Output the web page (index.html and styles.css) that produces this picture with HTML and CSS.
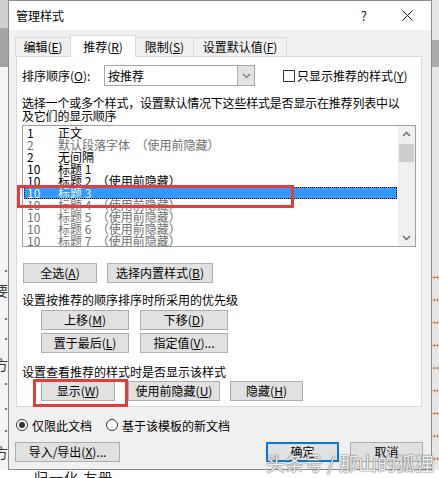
FILE: index.html
```html
<!DOCTYPE html>
<html lang="zh-CN">
  <head>
    <meta charset="UTF-8" />
    <title>管理样式</title>
    <link rel="stylesheet" href="styles.css">
  </head>
  <body>
    <div class="screen">
      <div class="side-left">
        <span class="peek dot d1">··</span>
        <span class="peek ch c1">要</span>
        <span class="peek dot d2">·</span>
        <span class="peek dot d3">·</span>
        <span class="peek ch c2">方</span>
        <span class="peek dot d4">·</span>
        <span class="peek dot d5">·</span>
        <span class="peek dot d6">·</span>
        <span class="peek ch c3">方</span>
      </div>

      <div class="dialog">
        <div class="titlebar">
          <span class="title">管理样式</span>
          <span class="help">?</span>
          <svg class="close" width="11" height="11" viewBox="0 0 11 11">
            <path d="M0.5 0.5 L10.5 10.5 M10.5 0.5 L0.5 10.5" stroke="#111" stroke-width="1" fill="none" />
          </svg>
        </div>

        <div class="content">
          <div class="tabs">
            <div class="tab t1">编辑(<u>E</u>)</div>
            <div class="tab t2 active">推荐(<u>R</u>)</div>
            <div class="tab t3">限制(<u>S</u>)</div>
            <div class="tab t4">设置默认值(<u>F</u>)</div>
          </div>

          <div class="panel">
            <div class="sort-row">
              <span class="sort-label">排序顺序(<u>O</u>):</span>
              <div class="select">
                <span class="select-value">按推荐</span>
                <span class="select-arrow">
                  <svg width="9" height="6" viewBox="0 0 9 6">
                    <path d="M1 1 L4.5 4.5 L8 1" stroke="#707070" stroke-width="1.2" fill="none" />
                  </svg>
                </span>
              </div>
              <span class="checkbox"></span>
              <span class="check-label">只显示推荐的样式(<u>Y</u>)</span>
            </div>

            <p class="desc">选择一个或多个样式，设置默认情况下这些样式是否显示在推荐列表中以<br>及它们的显示顺序</p>

            <div class="listbox">
              <div class="items">
                <div class="item"><span class="num">1</span><span class="name">正文</span></div>
                <div class="item muted"><span class="num">2</span><span class="name">默认段落字体  （使用前隐藏）</span></div>
                <div class="item"><span class="num">2</span><span class="name">无间隔</span></div>
                <div class="item"><span class="num">10</span><span class="name">标题 1</span></div>
                <div class="item"><span class="num">10</span><span class="name">标题 2  （使用前隐藏）</span></div>
                <div class="item selected"><span class="num">10</span><span class="name">标题 3</span></div>
                <div class="item muted"><span class="num">10</span><span class="name">标题 4  （使用前隐藏）</span></div>
                <div class="item muted"><span class="num">10</span><span class="name">标题 5  （使用前隐藏）</span></div>
                <div class="item muted"><span class="num">10</span><span class="name">标题 6  （使用前隐藏）</span></div>
                <div class="item muted"><span class="num">10</span><span class="name">标题 7  （使用前隐藏）</span></div>
              </div>
              <div class="scrollbar">
                <svg width="9" height="6" viewBox="0 0 9 6">
                  <path d="M1 5 L4.5 1.5 L8 5" stroke="#606060" stroke-width="1.3" fill="none" />
                </svg>
                <div class="thumb"></div>
                <div class="track"></div>
                <svg width="9" height="6" viewBox="0 0 9 6">
                  <path d="M1 1 L4.5 4.5 L8 1" stroke="#606060" stroke-width="1.3" fill="none" />
                </svg>
              </div>
              <div class="mark mark-row"></div>
            </div>

            <div class="btn-row first">
              <button class="btn w74">全选(<u>A</u>)</button>
              <button class="btn w106">选择内置样式(<u>B</u>)</button>
            </div>

            <p class="label">设置按推荐的顺序排序时所采用的优先级</p>
            <div class="btn-grid">
              <button class="btn">上移(<u>M</u>)</button>
              <button class="btn">下移(<u>D</u>)</button>
              <button class="btn">置于最后(<u>L</u>)</button>
              <button class="btn">指定值(<u>V</u>)...</button>
            </div>

            <p class="label second">设置查看推荐的样式时是否显示该样式</p>
            <div class="btn-row third">
              <div class="marked">
                <button class="btn w74">显示(<u>W</u>)</button>
                <div class="mark mark-btn"></div>
              </div>
              <button class="btn w92">使用前隐藏(<u>U</u>)</button>
              <button class="btn w73">隐藏(<u>H</u>)</button>
            </div>
          </div>

          <div class="radio-row">
            <span class="radio checked"></span>
            <span class="radio-label">仅限此文档</span>
            <span class="radio second"></span>
            <span class="radio-label">基于该模板的新文档</span>
          </div>

          <div class="footer">
            <button class="btn w105">导入/导出(<u>X</u>)...</button>
            <button class="btn w73 default">确定</button>
            <button class="btn w73">取消</button>
          </div>
        </div>
      </div>

      <div class="side-right">
        <div class="dots"></div>
      </div>
    </div>

    <div class="doc-line">归一化 友册</div>

    <div class="watermark">头条号 / 那山的狐狸</div>
  </body>
</html>
```

FILE: styles.css
```css
* {
  box-sizing: border-box;
}

body {
  margin: 0;
  width: 439px;
  height: 478px;
  overflow: hidden;
  position: relative;
  background-color: #ffffff;
  font-family: "Noto Sans CJK SC", "Noto Sans", sans-serif;
  font-size: 12px;
  color: #000000;
}

u {
  text-decoration-thickness: 1px;
  text-underline-offset: 1px;
}

p {
  margin: 0;
}

.screen {
  display: flex;
  height: 470px;
}

/* document window behind the dialog */
.side-left {
  width: 8px;
  position: relative;
  overflow: hidden;
  background: linear-gradient(#cfcfcf 0 28px, #a4a4a4 28px 67px, #f4f4f4 67px);
}

.peek {
  position: absolute;
  color: #333;
  line-height: 14px;
}

.peek.dot {
  left: 1px;
  font-size: 10px;
  color: #555;
}

.peek.ch {
  left: -6px;
  font-size: 14px;
}

.d1 { top: 264px; }
.c1 { top: 283px; }
.d2 { top: 312px; }
.d3 { top: 332px; }
.c2 { top: 357px; }
.d4 { top: 377px; }
.d5 { top: 402px; }
.d6 { top: 424px; }
.c3 { top: 445px; }

.side-right {
  width: 7px;
  background: linear-gradient(#e4e4e4 0 40px, #aaaaaa 40px 67px, #e6e6e6 67px);
}

.side-right .dots {
  margin-top: 266px;
  height: 204px;
  background-image: radial-gradient(circle, #c8783a 0.9px, transparent 1.3px);
  background-size: 3px 22.7px;
  background-position: 1px 0;
}

/* dialog */
.dialog {
  width: 424px;
  border: 1px solid #8a8a8a;
  background-color: #f0f0f0;
  display: flex;
  flex-direction: column;
}

.titlebar {
  height: 29px;
  background-color: #ffffff;
  display: flex;
  align-items: center;
  padding-left: 7px;
}

.title {
  flex: 1;
  font-size: 12px;
}

.help {
  font-size: 13px;
  color: #222;
  margin-right: 35px;
}

.close {
  margin-right: 18px;
}

.content {
  padding: 5px 0 0 6px;
  display: flex;
  flex-direction: column;
}

.tabs {
  display: flex;
  align-items: flex-end;
  height: 21px;
  position: relative;
  z-index: 1;
}

.tab {
  height: 19px;
  border: 1px solid #d9d9d9;
  border-bottom: none;
  margin-right: -1px;
  display: flex;
  align-items: center;
  justify-content: center;
  line-height: 14px;
  background-color: #f0f0f0;
}

.tab.active {
  height: 22px;
  margin-bottom: -1px;
  background-color: #ffffff;
}

.t1 { width: 56px; }
.t2 { width: 66px; }
.t3 { width: 59px; }
.t4 { width: 94px; }

.panel {
  margin-left: 1px;
  width: 406px;
  height: 351px;
  border: 1px solid #d9d9d9;
  background-color: #ffffff;
  padding: 8px 0 0 5px;
  display: flex;
  flex-direction: column;
}

.sort-row {
  display: flex;
  align-items: center;
  height: 21px;
}

.sort-label {
  width: 82px;
}

.select {
  width: 151px;
  height: 21px;
  border: 1px solid #a5a5a5;
  display: flex;
  align-items: center;
}

.select-value {
  flex: 1;
  padding-left: 3px;
}

.select-arrow {
  width: 17px;
  height: 19px;
  border-left: 1px solid #b0b0b0;
  background-color: #e2e2e2;
  display: flex;
  align-items: center;
  justify-content: center;
}

.checkbox {
  width: 12px;
  height: 12px;
  border: 1px solid #333333;
  margin-left: 28px;
  margin-right: 2px;
}

.desc {
  margin-top: 10px;
  line-height: 13px;
  letter-spacing: -0.2px;
}

.listbox {
  position: relative;
  margin-top: 3px;
  width: 394px;
  height: 122px;
  border: 1px solid #a0a0a0;
  display: flex;
}

.items {
  flex: 1;
  padding-top: 1px;
}

.item {
  display: flex;
  height: 12px;
  line-height: 12px;
  margin: 0 1px 0 1px;
  padding-left: 3px;
  white-space: pre;
}

.num {
  width: 31px;
}

.item.muted {
  color: #707070;
}

.item.selected {
  background-color: #3399ff;
  color: #eaf4ff;
  outline: 1px dotted #000;
  outline-offset: -1px;
}

.scrollbar {
  width: 17px;
  background-color: #f0f0f0;
  display: flex;
  flex-direction: column;
  align-items: center;
  padding: 5px 0 5px;
}

.thumb {
  width: 15px;
  height: 18px;
  margin-top: 7px;
  background-color: #cdcdcd;
}

.track {
  flex: 1;
}

.mark {
  position: absolute;
  border: 3px solid #e23d3d;
}

.mark-row {
  left: -6px;
  top: 59px;
  width: 277px;
  height: 23px;
}

.btn {
  height: 20px;
  padding: 0;
  border: 1px solid #adadad;
  background-color: #e1e1e1;
  font-family: inherit;
  font-size: 12px;
  line-height: 14px;
  color: #000;
}

.btn.default {
  border: 2px solid #0078d7;
}

.w73 { width: 73px; }
.w74 { width: 74px; }
.w92 { width: 92px; }
.w105 { width: 105px; }
.w106 { width: 106px; }

.btn-row {
  display: flex;
}

.btn-row.first {
  margin-top: 16px;
  margin-left: 1px;
  gap: 10px;
}

.label {
  margin-top: 10px;
  line-height: 14px;
}

.label.second {
  margin-top: 12px;
}

.btn-grid {
  margin-top: 3px;
  margin-left: 19px;
  display: grid;
  grid-template-columns: 88px 88px;
  gap: 3px 11px;
}

.btn-row.third {
  margin-top: 2px;
  margin-left: 19px;
  gap: 13px;
}

.btn-row.third .w92 {
  margin-right: -3px;
}

.marked {
  position: relative;
}

.mark-btn {
  left: -8px;
  top: -2px;
  width: 95px;
  height: 28px;
}

.radio-row {
  margin-top: 10px;
  margin-left: 1px;
  height: 16px;
  display: flex;
  align-items: center;
}

.radio {
  width: 12px;
  height: 12px;
  border: 1px solid #333333;
  border-radius: 50%;
  background-color: #ffffff;
  display: flex;
  align-items: center;
  justify-content: center;
}

.radio.checked::after {
  content: "";
  width: 6px;
  height: 6px;
  border-radius: 50%;
  background-color: #333333;
}

.radio.second {
  margin-left: 14px;
}

.radio-label {
  margin-left: 4px;
}

.footer {
  margin-top: 9px;
  display: flex;
}

.footer .default {
  margin-left: 146px;
  margin-right: 11px;
}

.doc-line {
  padding-left: 34px;
  font-size: 14px;
  line-height: 14px;
  color: #222;
  letter-spacing: 1px;
}

.watermark {
  position: absolute;
  left: 266px;
  top: 452px;
  font-size: 19px;
  line-height: 22px;
  color: rgba(255, 255, 255, 0.92);
  text-shadow: 0 0 1px #555, 0 0 2px #777;
  white-space: nowrap;
}
```
